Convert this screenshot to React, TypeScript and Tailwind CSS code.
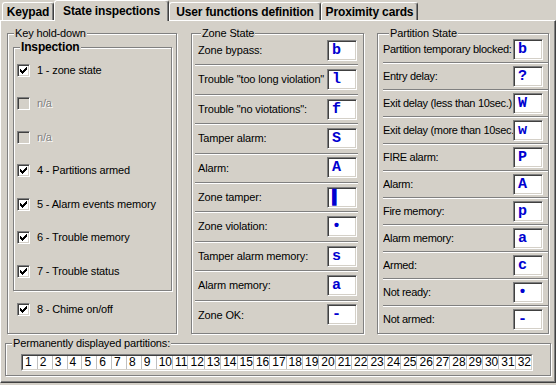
import type { ReactNode } from "react";

const ZONE: [string, string][] = [
  ["Zone bypass:", "b"],
  ['Trouble "too long violation"', "l"],
  ['Trouble "no viotations":', "f"],
  ["Tamper alarm:", "S"],
  ["Alarm:", "A"],
  ["Zone tamper:", "▌"],
  ["Zone violation:", "•"],
  ["Tamper alarm memory:", "s"],
  ["Alarm memory:", "a"],
  ["Zone OK:", "-"],
];

const PARTITION: [string, string][] = [
  ["Partition temporary blocked:", "b"],
  ["Entry delay:", "?"],
  ["Exit delay (less than 10sec.)", "W"],
  ["Exit delay (more than 10sec.)", "w"],
  ["FIRE alarm:", "P"],
  ["Alarm:", "A"],
  ["Fire memory:", "p"],
  ["Alarm memory:", "a"],
  ["Armed:", "c"],
  ["Not ready:", "•"],
  ["Not armed:", "-"],
];

const CHECKS = [
  { label: "1 - zone state", on: true },
  { label: "n/a", on: false, off: true },
  { label: "n/a", on: false, off: true },
  { label: "4 - Partitions armed", on: true },
  { label: "5 - Alarm events memory", on: true },
  { label: "6 - Trouble memory", on: true },
  { label: "7 - Trouble status", on: true },
];

function Group({
  label,
  bold,
  className,
  children,
}: {
  label: string;
  bold?: boolean;
  className: string;
  children: ReactNode;
}) {
  return (
    <fieldset
      className={`min-w-0 shrink-0 border border-[#808080] shadow-[inset_1px_1px_0_#fff,1px_1px_0_#fff] ${className}`}
    >
      <legend
        className={`ml-[6px] bg-[#d4d0c8] px-[1px] leading-[14px] ${bold ? "text-[12px] font-bold" : ""}`}
      >
        {label}
      </legend>
      {children}
    </fieldset>
  );
}

function Check({ on, off }: { on: boolean; off?: boolean }) {
  return (
    <span
      className={`block size-[13px] shrink-0 border border-t-[#808080] border-l-[#808080] border-b-white border-r-white shadow-[inset_1px_1px_0_#404040,inset_-1px_-1px_0_#d4d0c8] ${off ? "bg-[#d4d0c8]" : "bg-white"}`}
    >
      {on ? (
        <svg width="11" height="11" className="block" shapeRendering="crispEdges">
          {[
            [2, 4],
            [3, 5],
            [4, 6],
            [5, 5],
            [6, 4],
            [7, 3],
            [8, 2],
          ].map(([x, y]) => (
            <rect key={x} x={x} y={y} width="1" height="3" fill="#000" />
          ))}
        </svg>
      ) : null}
    </span>
  );
}

function CheckRow({ label, on, off }: { label: string; on: boolean; off?: boolean }) {
  return (
    <div className="flex h-[20px] items-center gap-[7px]">
      <Check on={on} off={off} />
      <span className={off ? "text-[#808080] [text-shadow:1px_1px_0_#fff]" : ""}>{label}</span>
    </div>
  );
}

function ValueBox({ v }: { v: string }) {
  return (
    <span className="flex h-[21px] w-[30px] shrink-0 items-center overflow-hidden border border-t-[#808080] border-l-[#808080] border-b-white border-r-white bg-white pl-[4px] font-['Liberation_Mono','DejaVu_Sans_Mono',monospace] text-[15px] leading-none font-bold tracking-normal text-[#0000d0] shadow-[inset_1px_1px_0_#404040,inset_-1px_-1px_0_#d4d0c8]">
      {v}
    </span>
  );
}

function Rows({ items, boxGap, labelPad }: { items: [string, string][]; boxGap: string; labelPad: string }) {
  return (
    <>
      {items.map(([label, v], i) => (
        <div
          key={label}
          className={`flex min-w-0 flex-1 items-center ${i < items.length - 1 ? "border-b border-[#808080] shadow-[0_1px_0_#fff]" : ""}`}
        >
          <span className={`min-w-0 flex-1 overflow-hidden whitespace-nowrap ${labelPad}`}>{label}</span>
          <span className={`shrink-0 ${boxGap}`}>
            <ValueBox v={v} />
          </span>
        </div>
      ))}
    </>
  );
}

function Tab({ label, className }: { label: string; className: string }) {
  return (
    <div
      className={`flex h-[18px] shrink-0 items-center justify-center rounded-t-[3px] border-t border-l border-r border-white border-r-[#404040] pt-[1px] text-[12px] font-bold shadow-[inset_-1px_0_0_#808080] ${className}`}
    >
      {label}
    </div>
  );
}

export default function App() {
  return (
    <div className="h-[385px] w-[556px] overflow-hidden bg-[#d4d0c8] font-['Liberation_Sans',Arial,sans-serif] text-[11px] tracking-[-0.15px] text-black">
      <div className="flex h-[20px] items-end">
        <Tab label="Keypad" className="ml-[2px] w-[52px]" />
        <div className="relative z-10 -mb-px flex h-[21px] w-[115px] shrink-0 items-center justify-center rounded-t-[3px] border-t border-l border-r border-white border-r-[#404040] bg-[#d4d0c8] pb-[1px] text-[12px] font-bold shadow-[inset_-1px_0_0_#808080]">
          State inspections
        </div>
        <Tab label="User functions definition" className="w-[152px]" />
        <Tab label="Proximity cards" className="w-[97px]" />
      </div>

      <div className="h-[363px] border border-white border-r-[#404040] border-b-[#404040] shadow-[inset_-1px_-1px_0_#808080]">
        <div className="flex pt-[5px] pl-[6px]">
          <Group label="Key hold-down" className="h-[308px] w-[170px]">
            <Group label="Inspection" bold className="ml-[5px] h-[251px] w-[159px]">
              <div className="flex flex-col gap-[13.5px] pt-[6px] pl-[3px]">
                {CHECKS.map((c, i) => (
                  <CheckRow key={i} label={c.label} on={c.on} off={c.off} />
                ))}
              </div>
            </Group>
            <div className="mt-[8px] pl-[9px]">
              <CheckRow label="8 - Chime on/off" on />
            </div>
          </Group>

          <Group label="Zone State" className="ml-[14px] h-[308px] w-[173px] pr-[5px] pl-[3px]">
            <div className="-mt-[4px] flex h-[293px] flex-col">
              <Rows items={ZONE} boxGap="mr-[1px]" labelPad="pl-[3px]" />
            </div>
          </Group>

          <Group label="Partition State" className="ml-[13px] h-[308px] w-[172px] pl-[5px]">
            <div className="-mt-[4px] flex h-[296px] flex-col">
              <Rows items={PARTITION} boxGap="mr-[5px]" labelPad="tracking-[-0.3px]" />
            </div>
          </Group>
        </div>

        <Group label="Permanently displayed partitions:" className="mt-[2px] ml-[4px] h-[40px] w-[546px]">
          <div className="mt-[4px] ml-[15px] w-fit border border-t-[#808080] border-l-[#808080] border-b-white border-r-white">
            <div className="grid w-[510px] grid-cols-[repeat(32,1fr)] border border-t-[#404040] border-l-[#404040] border-b-[#d4d0c8] border-r-[#d4d0c8] bg-white text-[12px] leading-[13px] tracking-normal">
              {Array.from({ length: 32 }, (_, i) => (
                <span key={i} className="border-r border-[#c0c0c0] pl-[2px] last:border-r-0">
                  {i + 1}
                </span>
              ))}
            </div>
          </div>
        </Group>
      </div>
    </div>
  );
}
